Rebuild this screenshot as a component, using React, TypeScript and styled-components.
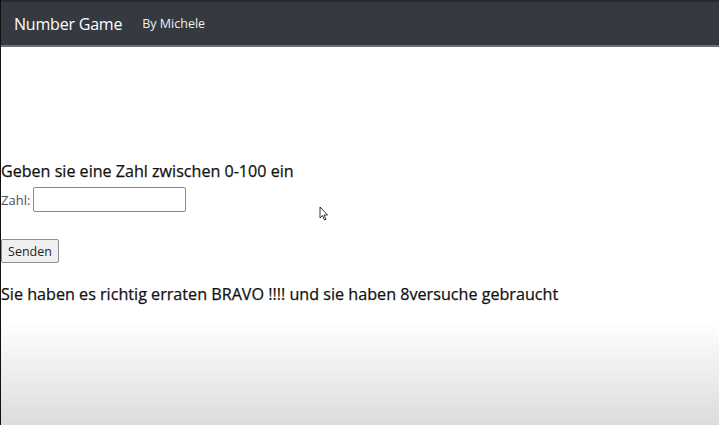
import React from "react";
import styled, { createGlobalStyle } from "styled-components";

const GlobalStyle = createGlobalStyle`
  html, body {
    margin: 0;
    padding: 0;
  }
  body {
    font-family: "Open Sans", "Noto Sans", sans-serif;
    color: #212529;
    background: #ffffff;
  }
`;

const Page = styled.div`
  position: relative;
  width: 719px;
  height: 425px;
  overflow: hidden;
  display: flex;
  flex-direction: column;
  background: linear-gradient(
    to bottom,
    #ffffff 0px,
    #ffffff 320px,
    #dcdcdc 425px
  );
  border-left: 1px solid #111;
  box-sizing: border-box;
`;

const NavBar = styled.nav`
  height: 47px;
  box-sizing: border-box;
  display: flex;
  align-items: center;
  gap: 20px;
  padding: 0 14px;
  background: #343a40;
  border-top: 2px solid #26292d;
  border-bottom: 2px solid #6b6e72;
  margin-left: -1px;
`;

const Brand = styled.span`
  color: #ffffff;
  font-size: 16px;
  letter-spacing: -0.2px;
`;

const NavLink = styled.span`
  color: #f0f0f0;
  font-size: 12.5px;
`;

const Main = styled.main`
  padding-top: 113px;
  display: flex;
  flex-direction: column;
  align-items: flex-start;
`;

const Heading = styled.h3`
  margin: 0;
  font-size: 16.1px;
  font-weight: 500;
  line-height: 22px;
  color: #111;
  -webkit-text-stroke: 0.25px #111;
`;

const FieldRow = styled.label`
  display: flex;
  align-items: center;
  gap: 3px;
  margin-top: 5px;
  font-size: 13px;
  color: #495057;
`;

const NumberInput = styled.input`
  width: 153px;
  height: 25px;
  box-sizing: border-box;
  border: 1px solid #8a8a8a;
  border-radius: 2px;
  padding: 0 4px;
  font: inherit;
`;

const SendButton = styled.button`
  margin-top: 27px;
  height: 24px;
  width: 58px;
  box-sizing: border-box;
  padding: 0;
  font-family: inherit;
  font-size: 12.5px;
  color: #212529;
  background: #efefef;
  border: 1px solid #8f8f8f;
  border-radius: 2px;
`;

const Result = styled(Heading)`
  margin-top: 20px;
  font-size: 16.15px;
`;

const Cursor = styled.svg`
  position: absolute;
  left: 318px;
  top: 206px;
`;

const App = () => {
  return (
    <>
      <GlobalStyle />
      <Page>
        <NavBar>
          <Brand>Number Game</Brand>
          <NavLink>By Michele</NavLink>
        </NavBar>
        <Main>
          <Heading>Geben sie eine Zahl zwischen 0-100 ein</Heading>
          <FieldRow>
            Zahl: <NumberInput type="text" />
          </FieldRow>
          <SendButton>Senden</SendButton>
          <Result>
            Sie haben es richtig erraten BRAVO !!!! und sie haben 8versuche
            gebraucht
          </Result>
        </Main>
        <Cursor width="10" height="16" viewBox="0 0 10 16">
          <path
            d="M1 1 L1 12 L3.5 9.5 L5.5 14 L7 13.3 L5 9 L8.5 9 Z"
            fill="#fff"
            stroke="#000"
            strokeWidth="0.8"
          />
        </Cursor>
      </Page>
    </>
  );
};

export default App;
